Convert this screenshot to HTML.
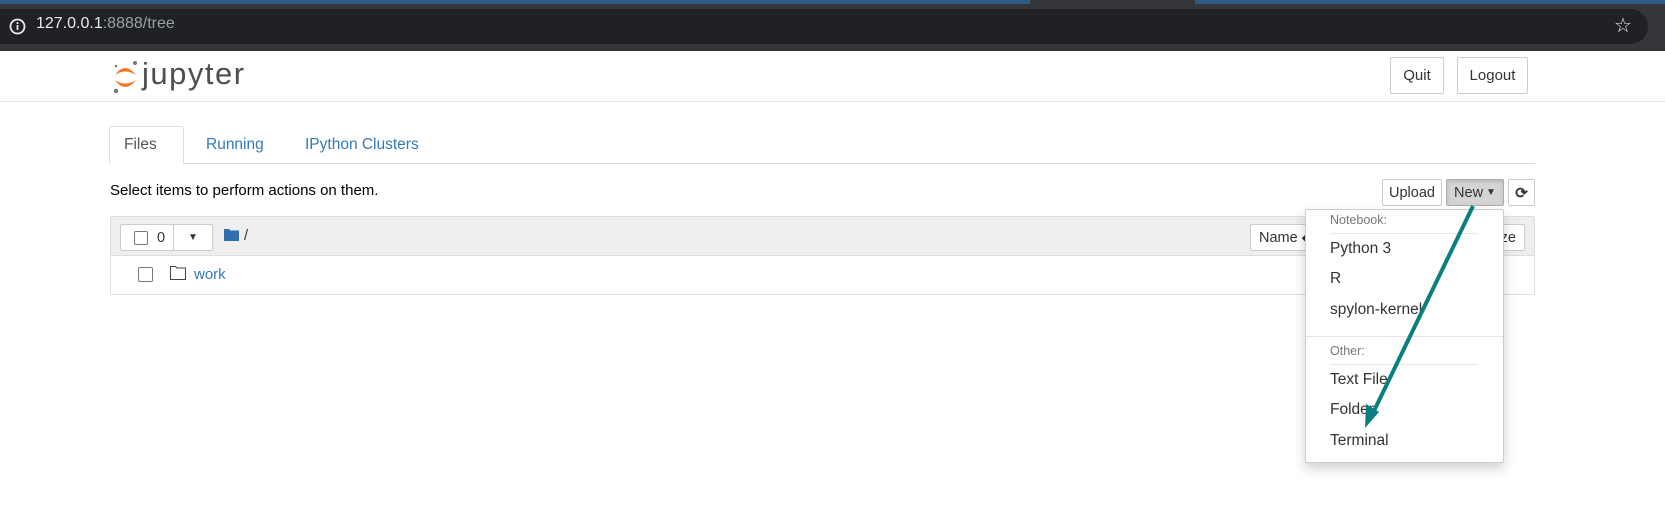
<!DOCTYPE html>
<html><head><meta charset="utf-8"><style>
*{box-sizing:border-box}
body{margin:0;width:1665px;height:527px;background:#fff;font-family:"Liberation Sans",sans-serif;font-size:14.5px;color:#000;position:relative;overflow:hidden}
.a{position:absolute}
.btn{position:absolute;border:1px solid #ccc;border-radius:2px;background:#fff;color:#333;display:flex;align-items:center;justify-content:center}
.mi{position:absolute;left:1330px;font-size:15.5px;color:#333}
.hd{position:absolute;left:1330px;font-size:12.5px;color:#777}
a{color:#337ab7;text-decoration:none}
</style></head><body>
<div class="a" style="left:0;top:0;width:1665px;height:51px;background:#35363a"></div>
<div class="a" style="left:0;top:0;width:1030px;height:4px;background:#2a5a85"></div>
<div class="a" style="left:1195px;top:0;width:470px;height:4px;background:#2a5a85"></div>
<div class="a" style="left:0;top:9px;width:1648px;height:35px;background:#202124;border-radius:0 18px 18px 0"></div>
<svg class="a" style="left:9px;top:18px" width="17" height="17" viewBox="0 0 17 17"><circle cx="8.5" cy="8.5" r="7" fill="none" stroke="#e8eaed" stroke-width="1.8"/><rect x="7.6" y="7" width="1.8" height="5" fill="#e8eaed"/><rect x="7.6" y="4.2" width="1.8" height="1.8" fill="#e8eaed"/></svg>
<div class="a" style="left:36px;top:15px;font-size:16px;color:#e8eaed">127.0.0.1<span style="color:#9aa0a6">:8888/tree</span></div>
<div class="a" style="left:1614px;top:13px;font-size:20px;color:#e8eaed">☆</div>

<svg class="a" style="left:112px;top:60px" width="30" height="34" viewBox="0 0 30 34"><path d="M3 15 Q13 1 24 15 Q13 8 3 15Z" fill="#f37726"/><path d="M3 20 Q13 34 24 20 Q13 27 3 20Z" fill="#f37726"/><circle cx="23" cy="3" r="2" fill="#767677"/><circle cx="4" cy="31" r="2.2" fill="#767677"/><circle cx="4" cy="6" r="1.3" fill="#767677"/></svg>
<div class="a" style="left:142px;top:56px;font-size:31px;color:#4e4e4e;letter-spacing:1.5px">jupyter</div>
<div class="btn" style="left:1390px;top:57px;width:54px;height:37px;font-size:15px">Quit</div>
<div class="btn" style="left:1457px;top:57px;width:71px;height:37px;font-size:15px">Logout</div>
<div class="a" style="left:0;top:101px;width:1665px;height:1px;background:#e7e7e7"></div>

<div class="a" style="left:109px;top:163px;width:1426px;height:1px;background:#ddd"></div>
<div class="a" style="left:109px;top:126px;width:75px;height:38px;border:1px solid #ddd;border-bottom:1px solid #fff;border-radius:3px 3px 0 0;background:#fff"></div>
<div class="a" style="left:124px;top:136px;font-size:15.5px;color:#555">Files</div>
<div class="a" style="left:206px;top:136px;font-size:15.5px;color:#337ab7">Running</div>
<div class="a" style="left:305px;top:136px;font-size:15.5px;color:#337ab7">IPython Clusters</div>
<div class="a" style="left:110px;top:182px;font-size:15px">Select items to perform actions on them.</div>
<div class="btn" style="left:1382px;top:179px;width:60px;height:27px;font-size:14.5px">Upload</div>
<div class="btn" style="left:1446px;top:179px;width:58px;height:27px;font-size:14.5px;background:#d4d4d4;border-color:#adadad;box-shadow:inset 0 2px 4px rgba(0,0,0,.12)">New <span style="font-size:10px;margin-left:3px">▼</span></div>
<div class="btn" style="left:1508px;top:179px;width:27px;height:27px;font-size:15px;font-weight:bold">⟳</div>

<div class="a" style="left:110px;top:216px;width:1425px;height:79px;border:1px solid #ddd;border-radius:2px"></div>
<div class="a" style="left:111px;top:217px;width:1423px;height:39px;background:#eee;border-bottom:1px solid #ddd"></div>
<div class="btn" style="left:120px;top:224px;width:54px;height:27px;justify-content:flex-start;padding-left:13px"><span style="display:inline-block;width:14px;height:14px;border:1px solid #777;border-radius:2px;margin-right:9px"></span>0</div>
<div class="btn" style="left:173px;top:224px;width:40px;height:27px;font-size:10px">▼</div>
<svg class="a" style="left:224px;top:228px" width="15" height="13" viewBox="0 0 15 13"><path d="M0 1h5l1.5 1.5H15V13H0Z" fill="#2f6fb0"/></svg>
<div class="a" style="left:244px;top:228px;color:#333">/</div>
<div class="btn" style="left:1250px;top:224px;width:80px;height:27px;justify-content:flex-start;padding-left:8px">Name ◆</div>
<div class="btn" style="left:1480px;top:224px;width:45px;height:27px;justify-content:flex-end;padding-right:8px">ze</div>
<span class="a" style="left:138px;top:267px;width:15px;height:15px;border:1px solid #777;border-radius:2px"></span>
<svg class="a" style="left:170px;top:266px" width="16" height="14" viewBox="0 0 16 14"><path d="M0.5 0.5h5l1.5 1.5h8.5v11.5h-15Z" fill="none" stroke="#444"/></svg>
<div class="a" style="left:194px;top:266px;font-size:15px"><a>work</a></div>

<div class="a" style="left:1305px;top:209px;width:199px;height:254px;background:#fff;border:1px solid #ccc;border-radius:2px;box-shadow:0 6px 12px rgba(0,0,0,.18)"></div>
<div class="hd" style="top:213px">Notebook:</div>
<div class="a" style="left:1330px;top:233px;width:148px;height:1px;background:#e5e5e5"></div>
<div class="mi" style="top:240px">Python 3</div>
<div class="mi" style="top:270px">R</div>
<div class="mi" style="top:301px">spylon-kernel</div>
<div class="a" style="left:1306px;top:336px;width:197px;height:1px;background:#e5e5e5"></div>
<div class="hd" style="top:344px">Other:</div>
<div class="a" style="left:1330px;top:364px;width:148px;height:1px;background:#e5e5e5"></div>
<div class="mi" style="top:371px">Text File</div>
<div class="mi" style="top:401px">Folder</div>
<div class="mi" style="top:432px">Terminal</div>

<svg class="a" style="left:0;top:0" width="1665" height="527"><line x1="1473" y1="206" x2="1372" y2="415" stroke="#0a7f7f" stroke-width="4"/><polygon points="1365,428 1366,404 1379,412" fill="#0a7f7f"/></svg>
</body></html>
